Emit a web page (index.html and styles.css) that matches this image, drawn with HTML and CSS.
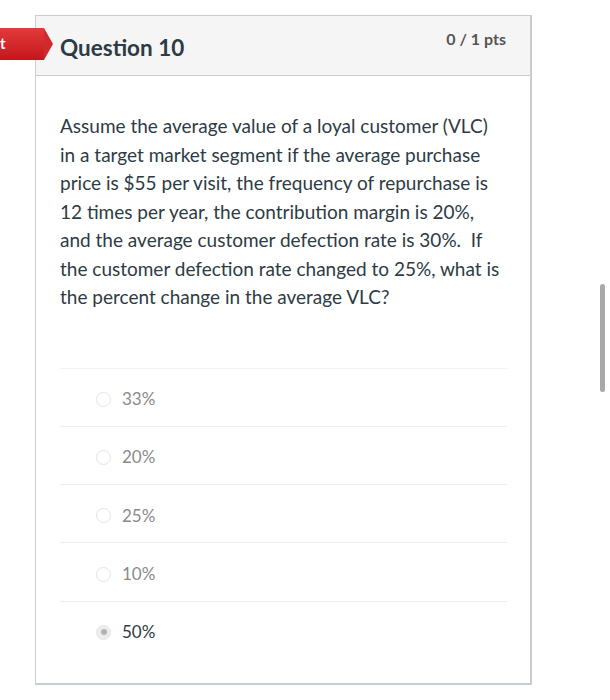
FILE: index.html
```html
<!DOCTYPE html>
<html>
<head>
<meta charset="utf-8">
<link rel="stylesheet" href="styles.css">
</head>
<body>
<div class="page">
  <div class="tag"><span>t</span></div>
  <div class="card">
    <div class="card-header">
      <h2 class="title">Question 10</h2>
      <div class="pts">0 / 1 pts</div>
    </div>
    <div class="card-body">
      <p class="question">Assume the average value of a loyal customer (VLC) in a target market segment if the average purchase price is $55 per visit, the frequency of repurchase is 12 times per year, the contribution margin is 20%, and the average customer defection rate is 30%.&nbsp; If the customer defection rate changed to 25%, what is the percent change in the average VLC?</p>
      <div class="answers">
        <div class="answer"><span class="radio"></span><span class="label">33%</span></div>
        <div class="answer"><span class="radio"></span><span class="label">20%</span></div>
        <div class="answer"><span class="radio"></span><span class="label">25%</span></div>
        <div class="answer"><span class="radio"></span><span class="label">10%</span></div>
        <div class="answer selected"><span class="radio"></span><span class="label">50%</span></div>
      </div>
    </div>
  </div>
  <div class="scrollbar"></div>
</div>
</body>
</html>
```

FILE: styles.css
```css
html, body {
  margin: 0;
  padding: 0;
  background: #ffffff;
}
body {
  font-family: Lato, "Liberation Sans", sans-serif;
  color: #2d3b45;
  width: 610px;
  height: 700px;
  overflow: hidden;
}
.page {
  position: relative;
  width: 610px;
  height: 700px;
  padding-top: 15px;
  box-sizing: border-box;
}
.card {
  margin-left: 35px;
  width: 497px;
  box-sizing: border-box;
  border: 1px solid #c7cdd1;
  border-right-width: 2px;
  border-bottom-width: 2px;
  background: #fff;
}
.card-header {
  height: 59px;
  background: #f5f5f5;
  border-bottom: 1px solid #c7cdd1;
  display: flex;
  justify-content: space-between;
  align-items: flex-start;
  padding: 0 24px 0 24px;
}
.title {
  margin: 18px 0 0 0;
  font-size: 22.5px;
  font-weight: 700;
  line-height: 28px;
  color: #2d3b45;
}
.pts {
  margin-top: 12px;
  font-size: 16px;
  font-weight: 700;
  color: #555;
  line-height: 22px;
}
.card-body {
  padding: 36px 23px 24px 24px;
}
.question {
  margin: 0 0 56px 0;
  font-size: 19px;
  line-height: 28.5px;
  color: #2d3b45;
}
.answers {
  display: flex;
  flex-direction: column;
}
.answer {
  height: 58.3px;
  box-sizing: border-box;
  border-top: 1px solid #eeeeee;
  display: flex;
  align-items: center;
  padding-left: 36px;
  padding-top: 3px;
  gap: 11px;
}
.answer:first-child {
  border-top-color: #f2f2f2;
}
.radio {
  width: 15px;
  height: 15px;
  border-radius: 50%;
  border: 1px solid #e4e4e4;
  box-sizing: border-box;
  background: #fff;
  display: flex;
  align-items: center;
  justify-content: center;
  margin-top: 1px;
}
.label {
  font-size: 17px;
  color: #8a8a8a;
}
.answer.selected .radio {
  background: #ededed;
  border-color: #e6e6e6;
}
.answer.selected .radio::after {
  content: "";
  width: 6px;
  height: 6px;
  border-radius: 50%;
  background: #b3b3b3;
}
.answer.selected .label {
  color: #2d3b45;
}
.tag {
  position: absolute;
  left: 0;
  top: 28px;
  width: 44px;
  height: 32px;
  background: linear-gradient(#e23b3b, #c3161c);
  color: #fff;
  font-weight: 700;
  font-size: 15px;
  display: flex;
  align-items: center;
}
.tag::after {
  content: "";
  position: absolute;
  right: -9px;
  top: 0;
  border-top: 16px solid transparent;
  border-bottom: 16px solid transparent;
  border-left: 9px solid #d12a2c;
}
.tag span {
  margin-left: 0;
  margin-top: -3px;
}
.scrollbar {
  position: absolute;
  left: 600px;
  top: 284px;
  width: 5px;
  height: 108px;
  border-radius: 3px;
  background: #a9a9a9;
}
```
